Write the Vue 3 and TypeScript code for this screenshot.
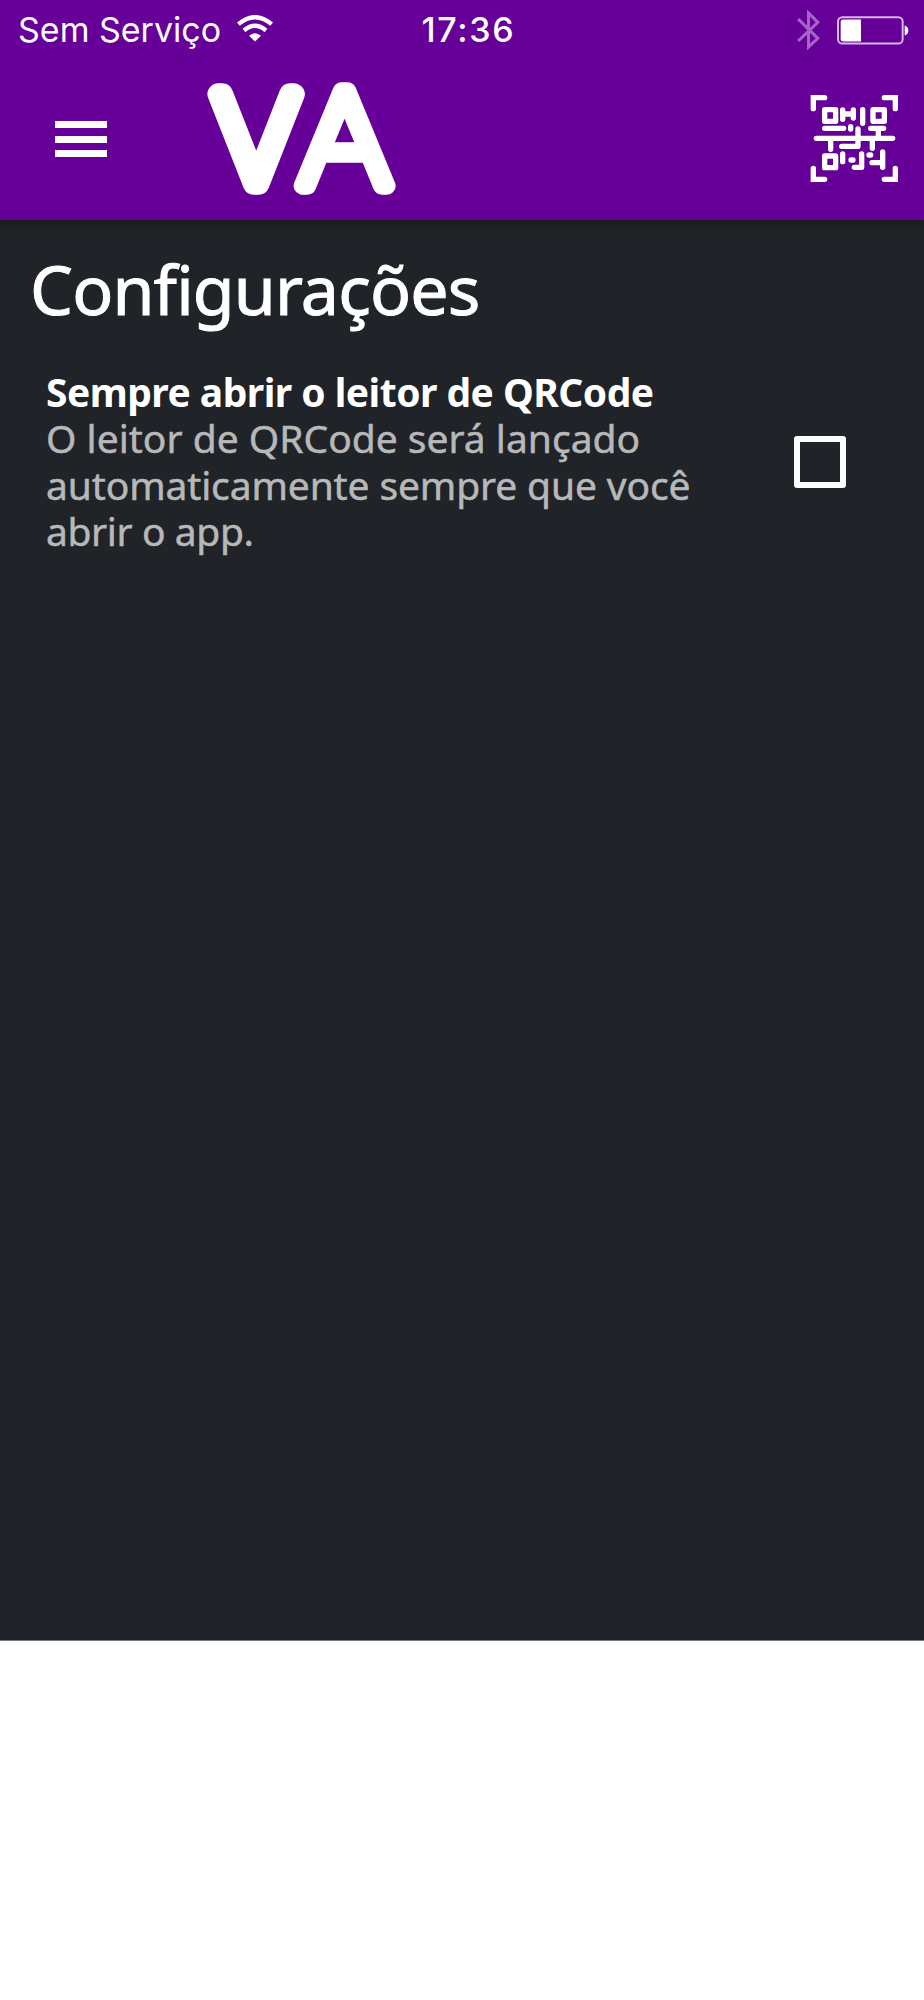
<script setup lang="ts">
import { ref } from 'vue'

const alwaysOpen = ref(false)
const description: string[] = [
  'O leitor de QRCode será lançado',
  'automaticamente sempre que você',
  'abrir o app.',
]
</script>

<template>
  <div class="screen">
    <header class="header">
      <div class="status">
        <div class="carrier">
          <span class="carrier-name">Sem Serviço</span>
          <svg class="wifi" viewBox="0 0 108 80">
            <path d="M4 27Q54-15 104 27" fill="none" stroke="#fff" stroke-width="13" />
            <path d="M21 46Q54 18 87 46" fill="none" stroke="#fff" stroke-width="13" />
            <path d="M36 62Q54 46 72 62L54 79Z" fill="#fff" />
          </svg>
        </div>
        <span class="time">17:36</span>
        <div class="indicators">
          <svg class="bluetooth" viewBox="0 0 68 120">
            <path d="M3 27L62 85L34 111V9L62 37L3 93" fill="none" stroke="#a566c6" stroke-width="9" />
          </svg>
          <svg class="battery" viewBox="0 0 216 86">
            <rect x="3" y="3" width="194" height="79" rx="13" fill="none" stroke="#d6b8e5" stroke-width="6" />
            <path d="M18 10H72V76H18Q11 76 11 69V17Q11 10 18 10Z" fill="#fff" />
            <path d="M203 28Q214 31 214 43T203 58Z" fill="#fff" />
          </svg>
        </div>
      </div>
      <div class="toolbar">
        <button class="menu" aria-label="Menu"><i></i><i></i><i></i></button>
        <svg class="logo" viewBox="0 0 200 120">
          <text transform="translate(16.5 103.5) scale(1.05 1)" class="logo-letter letter-v">V</text>
          <text transform="translate(100.5 106) scale(1.1 1)" class="logo-letter letter-a">A</text>
        </svg>
        <svg class="qr" viewBox="0 0 330 315">
          <g fill="none" stroke="#fff" stroke-width="16" stroke-linecap="round" stroke-linejoin="round">
            <path d="M40 71V38H74M253 38H286V71M40 250V283H74M253 283H286V250" stroke-linejoin="miter" />
            <path d="M74 74H107V109H74ZM219 74H253V109H219ZM74 213H107V248H74Z" />
            <path d="M128 75V103M160 75V99M128 87H160M188 74V115M74 130H131M152 125V132M212 130H251M235 130V155" />
            <path d="M49 160H278M92 164V193M174 132V184H125M217 164V190" />
            <path d="M128 207V230M153 225H159M185 207V247H163M207 210H212M248 201V247M216 233H246" />
          </g>
        </svg>
      </div>
    </header>
    <main class="content">
      <h1 class="title">Configurações</h1>
      <label class="setting">
        <span class="copy">
          <strong class="name">Sempre abrir o leitor de QRCode</strong>
          <span v-for="(line, i) in description" :key="line" class="line" :class="'line-' + i">{{ line }}</span>
        </span>
        <input v-model="alwaysOpen" class="check" type="checkbox" />
      </label>
    </main>
  </div>
</template>

<style>
body { background: #fff; }
</style>

<style scoped>
.screen {
  width: 924px;
  height: 1641px;
  display: flex;
  flex-direction: column;
  background: #202327;
  border-bottom: 1px solid #777a7e;
  box-sizing: border-box;
  font-family: "Noto Sans", sans-serif;
  color: #fff;
}
.header {
  height: 220px;
  flex: none;
  display: flex;
  flex-direction: column;
  background: #660099;
  box-shadow: 0 2px 12px rgba(0, 0, 0, .35);
}
.status {
  height: 60px;
  display: grid;
  grid-template-columns: 1fr auto 1fr;
  align-items: center;
  padding: 0 15px 0 18px;
  font-family: Inter, sans-serif;
  font-size: 34px;
  line-height: 60px;
  white-space: nowrap;
}
.carrier { display: flex; align-items: center; }
.carrier-name { width: 219px; letter-spacing: 0; font-weight: 400; }
.wifi { width: 36px; height: 27px; margin-top: -3px; }
.time { font-weight: 500; letter-spacing: 1.7px; padding-left: 10px; }
.indicators { display: flex; justify-content: flex-end; align-items: center; }
.bluetooth { width: 23px; height: 40px; margin-right: 17px; }
.battery { width: 72px; height: 29px; }
.toolbar { height: 160px; display: flex; align-items: flex-start; }
.menu {
  width: 52px;
  height: 36px;
  margin: 61px 0 0 55px;
  padding: 0;
  border: 0;
  background: none;
  display: flex;
  flex-direction: column;
  justify-content: space-between;
}
.menu i { height: 7px; background: #fff; }
.logo { width: 200px; height: 120px; margin: 20px 0 0 91px; overflow: visible; }
.logo-letter {
  font-family: Inter, sans-serif;
  font-weight: 100;
  fill: #fff;
  stroke: #fff;
  stroke-linejoin: round;
}
.letter-v { font-size: 124px; stroke-width: 22px; vector-effect: non-scaling-stroke; }
.letter-a { font-size: 131px; stroke-width: 17.5px; }
.qr { width: 110px; height: 105px; margin: 25px 14px 0 auto; }
.title {
  margin: 0;
  padding: 22px 0 0 30px;
  height: 126px;
  box-sizing: border-box;
  font-size: 68px;
  font-weight: 400;
  line-height: 93px;
  letter-spacing: -.85px;
  -webkit-text-stroke: 1px #fff;
}
.setting { margin-top: 23px; display: flex; align-items: center; padding: 0 78px 0 46px; }
.copy { display: flex; flex-direction: column; align-items: flex-start; white-space: nowrap; }
.name, .line { font-size: 39px; line-height: 46.3px; height: 46.3px; }
.name { font-weight: 700; letter-spacing: -.53px; }
.line { color: #b7b8b9; -webkit-text-stroke: .5px #b7b8b9; }
.line-1 { letter-spacing: -.13px; }
.line-2 { letter-spacing: -.4px; }
.check {
  appearance: none;
  box-sizing: border-box;
  width: 52px;
  height: 52px;
  margin: 0 0 0 auto;
  border: 6px solid #fff;
  border-radius: 3px;
}
</style>
